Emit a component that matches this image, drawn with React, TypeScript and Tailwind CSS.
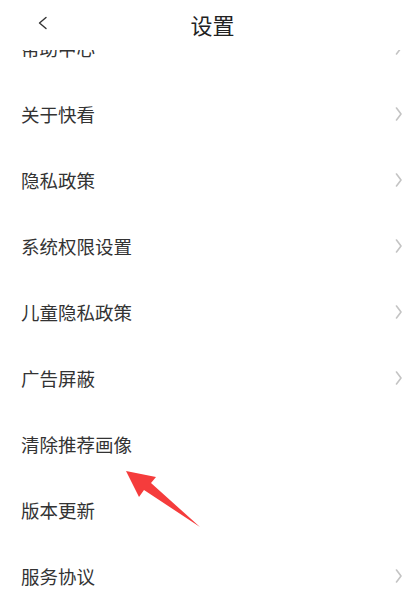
import React from 'react'

const rows = [
  { label: '帮助中心', arrow: true },
  { label: '关于快看', arrow: true },
  { label: '隐私政策', arrow: true },
  { label: '系统权限设置', arrow: true },
  { label: '儿童隐私政策', arrow: true },
  { label: '广告屏蔽', arrow: true },
  { label: '清除推荐画像', arrow: false },
  { label: '版本更新', arrow: false },
  { label: '服务协议', arrow: true },
]

function Chevron() {
  return (
    <svg width="8" height="14" viewBox="0 0 8 14" fill="none">
      <path d="M1.5 1 L6 7 L1.5 13" stroke="#c4c4c4" strokeWidth="1.6" strokeLinecap="round" strokeLinejoin="round" />
    </svg>
  )
}

export default function App() {
  return (
    <div
      className="relative h-[609px] w-[418px] overflow-hidden bg-white"
      style={{ fontFamily: '"Noto Sans CJK SC", "Noto Sans", sans-serif' }}
    >
      <div className="absolute left-0 top-0 z-10 flex h-[50px] w-full justify-center bg-white pl-[7px] pt-[13px]">
        <svg className="absolute left-[37px] top-[16px]" width="12" height="14" viewBox="0 0 12 14" fill="none">
          <path d="M9 1.5 L2.5 7 L9 12.5" stroke="#333" strokeWidth="1.4" strokeLinecap="round" strokeLinejoin="round" />
        </svg>
        <span className="text-[22px] leading-none text-[#222]">设置</span>
      </div>

      <div className="flex flex-col pt-[15px]">
        {rows.map((row) => (
          <div key={row.label} className="flex h-[66px] items-center justify-between pl-[21px] pr-[15px]">
            <span className="text-[18.5px] leading-none text-[#333]">{row.label}</span>
            {row.arrow ? <Chevron /> : null}
          </div>
        ))}
      </div>

      <svg className="absolute left-0 top-0" width="418" height="609" viewBox="0 0 418 609">
        <polygon
          points="126,471 156,477 151,483 200,527 144,490 139,497"
          fill="#f53c3c"
        />
      </svg>
    </div>
  )
}
